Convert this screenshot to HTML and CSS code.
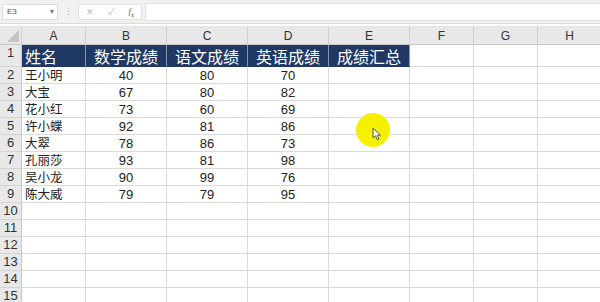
FILE: index.html
```html
<!DOCTYPE html>
<html lang="zh-CN">
  <head>
    <meta charset="UTF-8" />
    <meta name="viewport" content="width=device-width, initial-scale=1.0" />
    <title>成绩表</title>
    <link rel="stylesheet" href="styles.css">
  </head>
  <body>
    <div id="barra">
      <div class="caixa-nome">
        <span>E3</span>
        <span class="seta">&#9662;</span>
      </div>
      <div class="pontos">&#8942;</div>
      <div class="botoes">
        <span class="btn">&#10005;</span>
        <span class="btn">&#10003;</span>
        <span class="btn fx"><i>f</i><sub>x</sub></span>
      </div>
      <div class="formula"></div>
    </div>
    <div id="folha">
      <div id="grade"></div>
      <div class="destaque">
        <svg width="10" height="14" viewBox="0 0 10 14">
          <path d="M1 1 L1 11 L3.5 8.8 L5.4 12.8 L7 12 L5.2 8.2 L8.4 8.2 Z" fill="#fff" stroke="#555" stroke-width="1" stroke-linejoin="round" />
        </svg>
      </div>
    </div>
    <script>
      let gradeEl = document.querySelector("#grade");
      let colunas = ["A", "B", "C", "D", "E", "F", "G", "H"];
      let titulos = ["姓名", "数学成绩", "语文成绩", "英语成绩", "成绩汇总"];
      let dados = [
        ["王小明", 40, 80, 70],
        ["大宝", 67, 80, 82],
        ["花小红", 73, 60, 69],
        ["许小蝶", 92, 81, 86],
        ["大翠", 78, 86, 73],
        ["孔丽莎", 93, 81, 98],
        ["吴小龙", 90, 99, 76],
        ["陈大威", 79, 79, 95]
      ];

      function celula(classe, texto) {
        let el = document.createElement("div");
        el.className = classe;
        el.textContent = texto;
        gradeEl.appendChild(el);
      }

      celula("canto", "");
      for (let c of colunas) {
        celula("cab-col", c);
      }

      for (let r = 1; r <= 15; r++) {
        celula("cab-lin", r);
        for (let c = 0; c < colunas.length; c++) {
          if (r === 1 && c < titulos.length) {
            celula("cel titulo" + (c === 0 ? " esq" : ""), titulos[c]);
          } else if (r >= 2 && r <= 9 && c < 4) {
            let valor = dados[r - 2][c];
            celula(c === 0 ? "cel nome" : "cel num", valor);
          } else {
            celula("cel", "");
          }
        }
      }
    </script>
  </body>
</html>
```

FILE: styles.css
```css
body {
  margin: 0;
  width: 600px;
  height: 302px;
  overflow: hidden;
  background-color: #fff;
  font-family: "Liberation Sans", "Noto Sans CJK SC", sans-serif;
}

#barra {
  display: flex;
  align-items: center;
  height: 24px;
  padding: 0 0 0 2px;
  background-color: #f1f1f1;
  border-bottom: 1px solid #dcdcdc;
  box-sizing: border-box;
}

.caixa-nome {
  display: flex;
  justify-content: space-between;
  align-items: center;
  width: 56px;
  height: 16px;
  padding: 0 3px 0 4px;
  box-sizing: border-box;
  background-color: #fff;
  border: 1px solid #dedede;
  font-size: 8px;
  color: #555;
}

.seta {
  font-size: 8px;
  color: #777;
}

.pontos {
  width: 20px;
  text-align: center;
  font-size: 9px;
  color: #b5b5b5;
}

.botoes {
  display: flex;
  justify-content: space-around;
  align-items: center;
  width: 64px;
  height: 16px;
  background-color: #fff;
  border: 1px solid #e2e2e2;
  box-sizing: border-box;
  margin-right: 3px;
}

.btn {
  font-size: 9px;
  color: #bdbdbd;
}

.fx {
  color: #555;
  font-family: "Liberation Serif", serif;
  font-size: 9px;
}

.fx sub {
  font-size: 6px;
}

.formula {
  flex: 1;
  height: 16px;
  background-color: #fff;
  border: 1px solid #e2e2e2;
  border-right: none;
}

#folha {
  position: relative;
  margin-top: 2px;
  border-top: 1px solid #e4e4e4;
}

#grade {
  display: grid;
  grid-template-columns: 22px 64px 81px 81px 81px 81px 64px 64px 64px;
  grid-template-rows: 18px 22px repeat(14, 17px);
}

#grade > div {
  box-sizing: border-box;
  border-right: 1px solid #dadada;
  border-bottom: 1px solid #dadada;
  white-space: nowrap;
}

.canto {
  position: relative;
  background-color: #e8e8e8;
}

.canto::after {
  content: "";
  position: absolute;
  right: 2px;
  bottom: 2px;
  border-left: 12px solid transparent;
  border-bottom: 12px solid #c4c4c4;
}

.cab-col {
  background-color: #e8e8e8;
  color: #333;
  font-size: 12px;
  text-align: center;
  line-height: 14px;
  padding-top: 2px;
}

#grade > .cab-col,
#grade > .canto {
  border-right-color: #cfcfcf;
  border-bottom-color: #c8c8c8;
}

.cab-lin {
  background-color: #e8e8e8;
  color: #333;
  font-size: 13px;
  text-align: center;
  line-height: 16px;
}

#grade > .cab-lin {
  border-right-color: #c8c8c8;
  border-bottom-color: #d4d4d4;
}

.cel {
  font-size: 13px;
  line-height: 16px;
  color: #222;
}

.titulo {
  background-color: #203864;
  color: #fff;
  font-family: "Noto Sans CJK SC", sans-serif;
  font-size: 16px;
  line-height: 22px;
  text-align: center;
}

#grade > .titulo {
  border-right-color: #8a96ad;
  border-bottom-color: #203864;
}

.titulo.esq {
  text-align: left;
  padding-left: 3px;
}

.nome {
  font-family: "Noto Sans CJK SC", sans-serif;
  font-size: 12.5px;
  padding-left: 3px;
}

.num {
  text-align: center;
  padding-top: 1px;
  line-height: 15px;
}

.destaque {
  position: absolute;
  left: 356px;
  top: 86px;
  width: 34px;
  height: 34px;
  border-radius: 50%;
  background-color: #f5f000;
}

.destaque svg {
  position: absolute;
  left: 16px;
  top: 14px;
}
```
